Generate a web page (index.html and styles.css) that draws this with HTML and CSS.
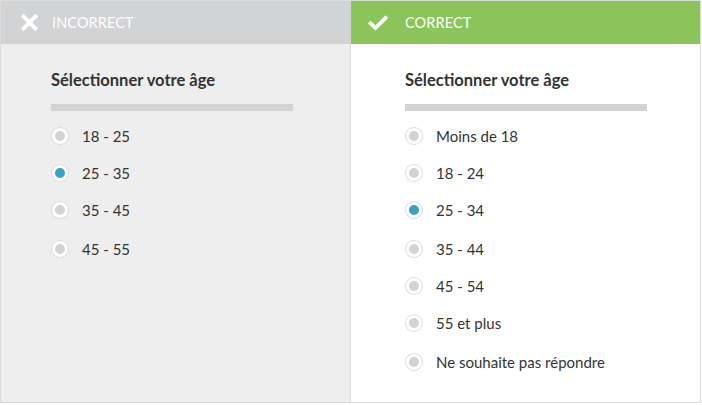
FILE: index.html
```html
<!DOCTYPE html>
<html lang="fr">
<head>
<meta charset="utf-8">
<link rel="stylesheet" href="styles.css">
</head>
<body>
<div class="compare">
  <section class="panel panel-bad">
    <header class="head">
      <svg class="icon" viewBox="0 0 16 16" width="17" height="17"><path d="M2.5 2.5 L13.5 13.5 M13.5 2.5 L2.5 13.5" stroke="#fff" stroke-width="3.8" stroke-linecap="square" fill="none"/></svg>
      <span class="label">INCORRECT</span>
    </header>
    <div class="body">
      <h2 class="title">Sélectionner votre âge</h2>
      <div class="bar"></div>
      <ul class="options">
        <li class="opt"><span class="radio"></span>18 - 25</li>
        <li class="opt"><span class="radio on"></span>25 - 35</li>
        <li class="opt"><span class="radio"></span>35 - 45</li>
        <li class="opt gap"><span class="radio"></span>45 - 55</li>
      </ul>
    </div>
  </section>
  <section class="panel panel-good">
    <header class="head">
      <svg class="icon" viewBox="0 0 20 16" width="20" height="16"><path d="M2.5 8.5 L7.5 13 L17.5 3" stroke="#fff" stroke-width="3.8" stroke-linecap="square" stroke-linejoin="miter" fill="none"/></svg>
      <span class="label">CORRECT</span>
    </header>
    <div class="body">
      <h2 class="title">Sélectionner votre âge</h2>
      <div class="bar"></div>
      <ul class="options">
        <li class="opt"><span class="radio"></span>Moins de 18</li>
        <li class="opt"><span class="radio"></span>18 - 24</li>
        <li class="opt"><span class="radio on"></span>25 - 34</li>
        <li class="opt gap"><span class="radio"></span>35 - 44</li>
        <li class="opt"><span class="radio"></span>45 - 54</li>
        <li class="opt"><span class="radio"></span>55 et plus</li>
        <li class="opt gap"><span class="radio"></span>Ne souhaite pas répondre</li>
      </ul>
    </div>
  </section>
</div>
</body>
</html>
```
FILE: styles.css
```css
html, body {
  margin: 0;
  padding: 0;
  background: #ffffff;
}
body {
  font-family: "Lato", "Noto Sans", sans-serif;
  color: #333333;
}
.compare {
  box-sizing: border-box;
  width: 701px;
  height: 403px;
  border: 1px solid #dcdcdc;
  display: grid;
  grid-template-columns: 350px 1fr;
}
.panel {
  display: flex;
  flex-direction: column;
}
.head {
  height: 43px;
  display: flex;
  align-items: center;
  color: #ffffff;
}
.panel-bad .head {
  background: #d2d3d5;
  padding-left: 20px;
}
.panel-good .head {
  background: #8bc55a;
  padding-left: 17px;
}
.icon {
  display: block;
  flex: none;
}
.label {
  font-size: 14.5px;
  letter-spacing: 0.1px;
}
.panel-bad .label { margin-left: 14px; }
.panel-good .label { margin-left: 17px; }

.body {
  flex: 1;
  padding-top: 25px;
}
.panel-bad .body {
  background: #eeeeee;
  border-right: 1px solid #dedede;
  padding-left: 50px;
}
.panel-good .body {
  background: #ffffff;
  padding-left: 54px;
}
.title {
  margin: 0;
  font-size: 16.5px;
  font-weight: 700;
  line-height: 22px;
  color: #333333;
}
.bar {
  width: 242px;
  height: 7px;
  background: #d3d3d3;
  margin-top: 13px;
}
.options {
  list-style: none;
  margin: 6px 0 0;
  padding: 0;
}
.opt {
  display: flex;
  align-items: center;
  height: 37px;
  font-size: 15px;
}
.opt.gap { margin-top: 2px; }
.radio {
  box-sizing: border-box;
  width: 16px;
  height: 16px;
  border-radius: 50%;
  background: #d3d3d3;
  border: 3px solid #ffffff;
  box-shadow: 0 0 0 1px #dcdcdc;
  margin-left: 1px;
  margin-right: 14px;
  flex: none;
}
.radio.on {
  background: #36a1c6;
}
```
